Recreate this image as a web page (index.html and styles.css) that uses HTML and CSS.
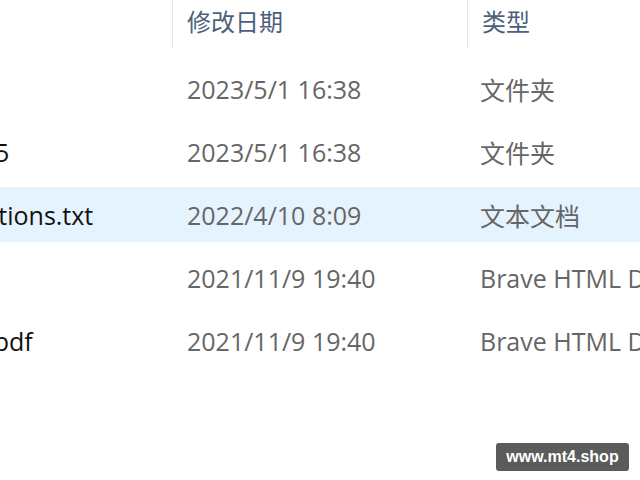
FILE: index.html
```html
<!DOCTYPE html>
<html lang="zh-CN">
<head>
<meta charset="utf-8">
<title>文件列表</title>
<link rel="stylesheet" href="styles.css">
</head>
<body>
<div class="explorer">
  <div class="head">
    <div class="hcell name-col">名称</div>
    <div class="hcell sep">修改日期</div>
    <div class="hcell sep">类型</div>
  </div>
  <div class="rows">
    <div class="row">
      <div class="cell name">Expert Advisors</div>
      <div class="cell date">2023/5/1 16:38</div>
      <div class="cell type">文件夹</div>
    </div>
    <div class="row">
      <div class="cell name">MetaTrader4 v1355</div>
      <div class="cell date">2023/5/1 16:38</div>
      <div class="cell type">文件夹</div>
    </div>
    <div class="row selected">
      <div class="cell name">Installation Instructions.txt</div>
      <div class="cell date">2022/4/10 8:09</div>
      <div class="cell type">文本文档</div>
    </div>
    <div class="row">
      <div class="cell name">MT4 Guide.html</div>
      <div class="cell date">2021/11/9 19:40</div>
      <div class="cell type">Brave HTML Document</div>
    </div>
    <div class="row">
      <div class="cell name">MT4 User Manual.pdf</div>
      <div class="cell date">2021/11/9 19:40</div>
      <div class="cell type">Brave HTML Document</div>
    </div>
  </div>
</div>
<div class="watermark">www.mt4.shop</div>
</body>
</html>
```
FILE: styles.css
```css
html, body {
  margin: 0;
  padding: 0;
  background: #ffffff;
}
body {
  width: 640px;
  height: 480px;
  overflow: hidden;
  position: relative;
  font-family: "Open Sans", "Noto Sans CJK SC", sans-serif;
  font-size: 25px;
}
.explorer {
  margin-left: -218px;
  width: 1000px;
}
.head,
.row {
  display: grid;
  grid-template-columns: 390px 295px 300px;
}
.head {
  height: 48px;
}
.hcell {
  line-height: 42px;
  font-size: 24px;
  color: #4c607a;
  font-family: "Noto Sans CJK SC", "Open Sans", sans-serif;
  white-space: nowrap;
  overflow: hidden;
}
.hcell.sep {
  border-left: 1px solid #e3e3e3;
  padding-left: 14px;
}
.hcell.name-col {
  visibility: hidden;
}
.rows {
  margin-top: 13px;
  display: flex;
  flex-direction: column;
  gap: 8px;
}
.row {
  height: 55px;
  align-items: center;
}
.row.selected {
  background: #e5f3ff;
}
.cell {
  white-space: nowrap;
  overflow: hidden;
}
.name {
  color: #111111;
}
.date {
  color: #666666;
  padding-left: 15px;
}
.type {
  color: #666666;
  padding-left: 13px;
  font-family: "Open Sans", "Noto Sans CJK SC", sans-serif;
}
.watermark {
  position: absolute;
  left: 496px;
  top: 443px;
  width: 133px;
  height: 28px;
  border-radius: 3px;
  background: #5b5b5b;
  color: #ffffff;
  font-family: "Liberation Sans", Arial, sans-serif;
  font-weight: bold;
  font-size: 16px;
  line-height: 28px;
  text-align: center;
}
```
